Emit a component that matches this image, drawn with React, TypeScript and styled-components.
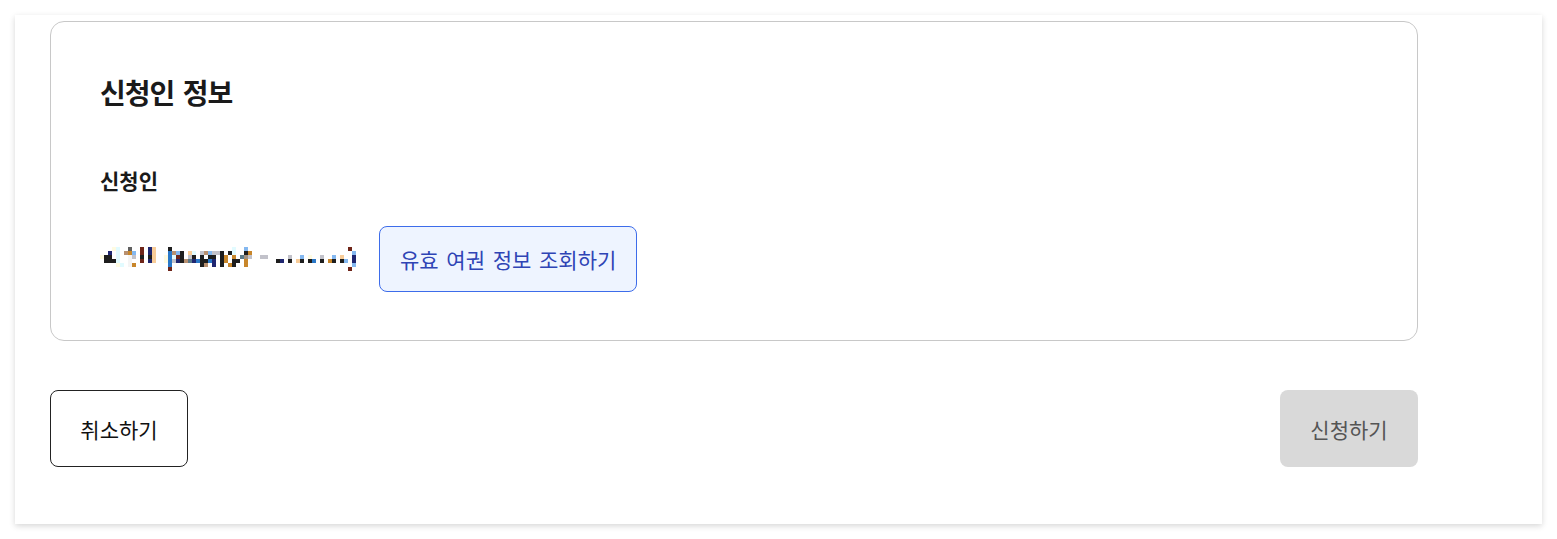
import styled, { createGlobalStyle } from 'styled-components'

const GlobalStyle = createGlobalStyle`
  body {
    margin: 0;
    background: #ffffff;
    font-family: "Noto Sans CJK KR", "Noto Sans", sans-serif;
    color: #1a1a1a;
  }
`

const Panel = styled.div`
  margin: 15px;
  padding: 6px 124px 57px 35px;
  background: #ffffff;
  box-shadow: 0 2px 6px rgba(0, 0, 0, 0.16);
`

const Card = styled.section`
  border: 1px solid #c8c8c8;
  border-radius: 14px;
  padding: 52px 49px 48px;
`

const Title = styled.h2`
  margin: 0;
  font-size: 28px;
  line-height: 36px;
  font-weight: 700;
  letter-spacing: -1px;
  word-spacing: 3px;
  color: #1a1a1a;
`

const Label = styled.h3`
  margin: 56px 0 0;
  font-size: 21px;
  line-height: 28px;
  font-weight: 700;
  color: #1a1a1a;
`

const ApplicantRow = styled.div`
  margin-top: 32px;
  display: flex;
  align-items: center;
  gap: 23px;
`

const Mosaic = styled.svg`
  display: block;
  flex: none;
`

const LookupButton = styled.button`
  height: 66px;
  padding: 0 20px;
  border: 1px solid #3d6cea;
  border-radius: 8px;
  background: #eef4ff;
  color: #2f44b5;
  font-family: inherit;
  font-size: 21px;
  word-spacing: 3px;
  cursor: pointer;
`

const Footer = styled.div`
  margin-top: 49px;
  display: flex;
  justify-content: space-between;
`

const ActionButton = styled.button<{ $variant: 'outline' | 'disabled' }>`
  width: 138px;
  height: 77px;
  border-radius: 8px;
  font-family: inherit;
  font-size: 21px;
  border: ${({ $variant }) => ($variant === 'outline' ? '1px solid #222' : 'none')};
  background: ${({ $variant }) => ($variant === 'outline' ? '#ffffff' : '#d9d9d9')};
  color: ${({ $variant }) => ($variant === 'outline' ? '#111' : '#555')};
  cursor: ${({ $variant }) => ($variant === 'outline' ? 'pointer' : 'default')};
`

// masked personal info, drawn as mosaic blocks (4px cells)
const palette: Record<string, string> = {
  k: '#1e1e1e',
  n: '#1f2670',
  b: '#2a78c8',
  o: '#c8862a',
  p: '#f8cc98',
  c: '#e2fbff',
  y: '#fffbe2',
  g: '#c2c2ca',
  r: '#6e2418',
  t: '#b89070',
  l: '#84b8f0',
  d: '#606060',
  e: '#5a7a8a',
  m: '#a09080',
  w: '#f4f4f4'
}

const mosaicRows = [
  '3y4c7d10r12n13p17k33c36l62r',
  '2n4c6t7o8l10r12n13p17b18t19l20k22p23c25g26t27l28g29g30k32k33c36k37o63l',
  '0y1k2k4c7w8g10k12k13p16y17b18c19r20k22g23k25k27k28k30k31o33o35e36m37g40g41g47g50l52y55g58l60p63n',
  '1k2k3k4c7w10r12n13p16y17b18g19n20k21t22e23n24b25k26k27b28n30k31o33k34k36o44k45n47k49p50k52k53b55k57o58k60k61l63n',
  '4y5c7w8o17b25k26t28n30k32o33k36o63l',
  '17r62r'
]

const cells = mosaicRows.flatMap((row, y) =>
  Array.from(row.matchAll(/(\d+)([a-z])/g)).map((m) => ({
    x: Number(m[1]),
    y,
    fill: palette[m[2]]
  }))
)

const MaskedName = () => (
  <Mosaic width={256} height={24} viewBox="0 0 256 24" aria-label="가려진 신청인 정보">
    {cells.map((c) => (
      <rect key={`${c.x}-${c.y}`} x={c.x * 4} y={c.y * 4} width={4} height={4} fill={c.fill} />
    ))}
  </Mosaic>
)

export default function App() {
  return (
    <>
      <GlobalStyle />
      <Panel>
        <Card>
          <Title>신청인 정보</Title>
          <Label>신청인</Label>
          <ApplicantRow>
            <MaskedName />
            <LookupButton type="button">유효 여권 정보 조회하기</LookupButton>
          </ApplicantRow>
        </Card>
        <Footer>
          <ActionButton $variant="outline" type="button">
            취소하기
          </ActionButton>
          <ActionButton $variant="disabled" type="button" disabled>
            신청하기
          </ActionButton>
        </Footer>
      </Panel>
    </>
  )
}
